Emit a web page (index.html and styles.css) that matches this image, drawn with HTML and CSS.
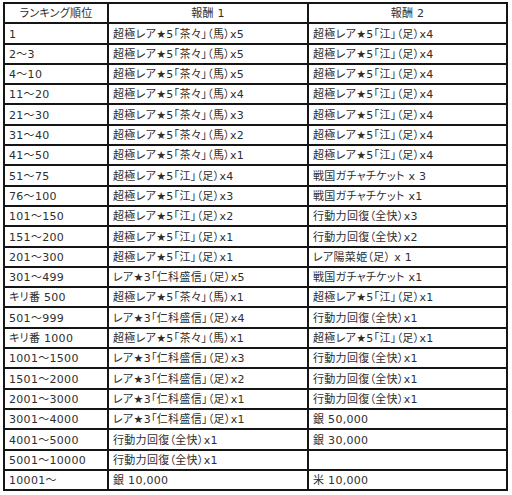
FILE: index.html
```html
<!DOCTYPE html>
<html lang="ja">
<head>
<meta charset="utf-8">
<title>ランキング報酬</title>
<link rel="stylesheet" href="styles.css">
</head>
<body>
<table class="rank-table">
  <colgroup>
    <col class="c-rank">
    <col class="c-rew1">
    <col class="c-rew2">
  </colgroup>
  <thead>
    <tr><th>ランキング順位</th><th>報酬 1</th><th>報酬 2</th></tr>
  </thead>
  <tbody>
    <tr><td>1</td><td>超極レア★5「茶々」（馬）x5</td><td>超極レア★5「江」（足）x4</td></tr>
    <tr><td>2～3</td><td>超極レア★5「茶々」（馬）x5</td><td>超極レア★5「江」（足）x4</td></tr>
    <tr><td>4～10</td><td>超極レア★5「茶々」（馬）x5</td><td>超極レア★5「江」（足）x4</td></tr>
    <tr><td>11～20</td><td>超極レア★5「茶々」（馬）x4</td><td>超極レア★5「江」（足）x4</td></tr>
    <tr><td>21～30</td><td>超極レア★5「茶々」（馬）x3</td><td>超極レア★5「江」（足）x4</td></tr>
    <tr><td>31～40</td><td>超極レア★5「茶々」（馬）x2</td><td>超極レア★5「江」（足）x4</td></tr>
    <tr><td>41～50</td><td>超極レア★5「茶々」（馬）x1</td><td>超極レア★5「江」（足）x4</td></tr>
    <tr><td>51～75</td><td>超極レア★5「江」（足）x4</td><td>戦国ガチャチケット x 3</td></tr>
    <tr><td>76～100</td><td>超極レア★5「江」（足）x3</td><td>戦国ガチャチケット x1</td></tr>
    <tr><td>101～150</td><td>超極レア★5「江」（足）x2</td><td>行動力回復（全快）x3</td></tr>
    <tr><td>151～200</td><td>超極レア★5「江」（足）x1</td><td>行動力回復（全快）x2</td></tr>
    <tr><td>201～300</td><td>超極レア★5「江」（足）x1</td><td>レア陽菜姫（足） x 1</td></tr>
    <tr><td>301～499</td><td>レア★3「仁科盛信」（足）x5</td><td>戦国ガチャチケット x1</td></tr>
    <tr><td>キリ番 500</td><td>超極レア★5「茶々」（馬）x1</td><td>超極レア★5「江」（足）x1</td></tr>
    <tr><td>501～999</td><td>レア★3「仁科盛信」（足）x4</td><td>行動力回復（全快）x1</td></tr>
    <tr><td>キリ番 1000</td><td>超極レア★5「茶々」（馬）x1</td><td>超極レア★5「江」（足）x1</td></tr>
    <tr><td>1001～1500</td><td>レア★3「仁科盛信」（足）x3</td><td>行動力回復（全快）x1</td></tr>
    <tr><td>1501～2000</td><td>レア★3「仁科盛信」（足）x2</td><td>行動力回復（全快）x1</td></tr>
    <tr><td>2001～3000</td><td>レア★3「仁科盛信」（足）x1</td><td>行動力回復（全快）x1</td></tr>
    <tr><td>3001～4000</td><td>レア★3「仁科盛信」（足）x1</td><td>銀 50,000</td></tr>
    <tr><td>4001～5000</td><td>行動力回復（全快）x1</td><td>銀 30,000</td></tr>
    <tr><td>5001～10000</td><td>行動力回復（全快）x1</td><td></td></tr>
    <tr><td>10001～</td><td>銀 10,000</td><td>米 10,000</td></tr>
  </tbody>
</table>
</body>
</html>
```

FILE: styles.css
```css
html, body {
  margin: 0;
  padding: 0;
  background: #ffffff;
}

body {
  padding: 2px 0 0 3px;
  font-family: "DejaVu Sans", "Noto Sans CJK JP", sans-serif;
  font-size: 11px;
  letter-spacing: 0.3px;
  color: #2e2e2e;
  font-feature-settings: "palt";
}

.rank-table {
  border-collapse: collapse;
  table-layout: fixed;
  width: 505px;
  border: 2px solid #151515;
}

.c-rank { width: 104px; }
.c-rew1 { width: 200px; }
.c-rew2 { width: 199px; }

.rank-table th,
.rank-table td {
  border: 2px solid #151515;
  height: 17.3px;
  padding: 0 4px 1px 4px;
  vertical-align: bottom;
  line-height: 14px;
  white-space: nowrap;
  overflow: hidden;
}

.rank-table th {
  font-weight: normal;
  text-align: center;
}

.rank-table td {
  text-align: left;
}
```
